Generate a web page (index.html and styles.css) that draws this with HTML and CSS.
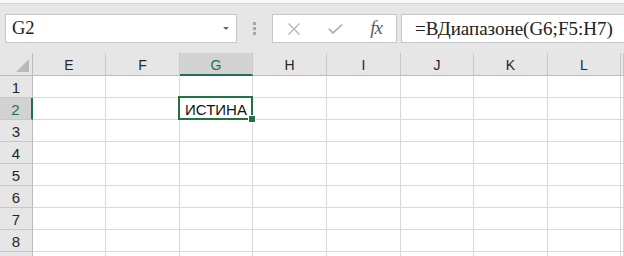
FILE: index.html
```html
<!DOCTYPE html>
<html lang="ru">

<head>
    <meta charset="UTF-8">
    <meta name="viewport" content="width=device-width, initial-scale=1.0">
    <title>ВДиапазоне</title>
    <link rel="stylesheet" href="styles.css">
</head>

<body>
    <div class="top-strip"></div>

    <div class="formula-bar">
        <div class="name-box">
            <span>G2</span>
            <span class="drop-arrow"></span>
        </div>
        <div class="grip">
            <span></span><span></span><span></span>
        </div>
        <div class="bar-buttons">
            <span class="btn">
                <svg width="14" height="12" viewBox="0 0 14 12">
                    <path d="M1.5 0.5 L12.5 11.5 M12.5 0.5 L1.5 11.5" stroke="#b3b3b3" stroke-width="1.3" fill="none" />
                </svg>
            </span>
            <span class="btn">
                <svg width="15" height="10" viewBox="0 0 15 10">
                    <path d="M0.8 4.8 L5 9 L14.2 0.6" stroke="#b3b3b3" stroke-width="1.8" fill="none" />
                </svg>
            </span>
            <span class="btn fx">fx</span>
        </div>
        <div class="formula">=ВДиапазоне(G6;F5:H7)</div>
    </div>

    <div class="sheet">
        <div class="corner"><span class="corner-tri"></span></div>
        <div class="col-head">E</div>
        <div class="col-head">F</div>
        <div class="col-head selected">G</div>
        <div class="col-head">H</div>
        <div class="col-head">I</div>
        <div class="col-head">J</div>
        <div class="col-head">K</div>
        <div class="col-head">L</div>
        <div class="col-head"></div>
    </div>
    <script>
        // build the rows of the grid (row 9 is only a sliver at the bottom)
        const sheet = document.querySelector('.sheet');
        for (let r = 1; r <= 9; r++) {
            const head = document.createElement('div');
            head.className = 'row-head' + (r === 2 ? ' selected' : '');
            if (r < 9) head.textContent = r;
            sheet.appendChild(head);
            for (let c = 0; c < 9; c++) {
                const cell = document.createElement('div');
                cell.className = 'cell';
                if (r === 2 && c === 2) {
                    cell.className = 'cell active';
                    cell.textContent = 'ИСТИНА';
                }
                sheet.appendChild(cell);
            }
        }
    </script>
</body>

</html>
```

FILE: styles.css
```css
* {
    box-sizing: border-box;
}

body {
    margin: 0;
    padding: 0;
    background-color: #e6e6e6;
    font-family: "Liberation Sans", Arial, sans-serif;
    overflow: hidden;
}

.top-strip {
    height: 4px;
    background-color: #f7f7f7;
    border-bottom: 1px solid #d4d4d4;
}

.formula-bar {
    display: flex;
    margin-top: 10px;
    height: 29px;
}

.name-box {
    display: flex;
    align-items: center;
    justify-content: space-between;
    margin-left: 5px;
    width: 232px;
    padding: 0 7px 0 6px;
    background-color: white;
    border: 1px solid #c6c6c6;
    font-family: "Liberation Serif", "Times New Roman", serif;
    font-size: 18.5px;
    color: #222;
}

.drop-arrow {
    width: 0;
    height: 0;
    border-left: 3px solid transparent;
    border-right: 3px solid transparent;
    border-top: 3px solid #6a6a6a;
}

.grip {
    width: 35px;
    display: flex;
    flex-direction: column;
    align-items: center;
    justify-content: center;
    gap: 2px;
}

.grip span {
    width: 3px;
    height: 3px;
    background-color: #a6a6a6;
}

.bar-buttons {
    display: grid;
    grid-template-columns: 41px 42px 40px;
    width: 125px;
    background-color: white;
    border: 1px solid #c6c6c6;
}

.btn {
    display: flex;
    align-items: center;
    justify-content: center;
}

.fx {
    font-family: "Liberation Serif", "Times New Roman", serif;
    font-style: italic;
    font-size: 19px;
    color: #5c5c5c;
    letter-spacing: -1px;
    padding-bottom: 2px;
}

.formula {
    flex: 1;
    margin-left: 4px;
    margin-right: -2px;
    padding-left: 13px;
    display: flex;
    align-items: center;
    background-color: white;
    border: 1px solid #c6c6c6;
    font-family: "Liberation Serif", "Times New Roman", serif;
    font-size: 19px;
    color: #222;
}

.sheet {
    display: grid;
    grid-template-columns: 33px 73px 74px 73px 74px 74px 73px 74px 73px 1fr;
    grid-template-rows: 23px;
    grid-auto-rows: 22px;
    margin-top: 10px;
    font-size: 14px;
}

.corner {
    position: relative;
    background-color: #e6e6e6;
    border-right: 1px solid #bcbcbc;
    border-bottom: 1px solid #bcbcbc;
}

.corner-tri {
    position: absolute;
    right: 3px;
    bottom: 3px;
    width: 0;
    height: 0;
    border-left: 13px solid transparent;
    border-bottom: 13px solid #b9b9b9;
}

.col-head,
.row-head {
    display: flex;
    align-items: center;
    justify-content: center;
    background-color: #e6e6e6;
    color: #262626;
    border-right: 1px solid #c8c8c8;
    border-bottom: 1px solid #bcbcbc;
}

.col-head {
    padding-top: 2px;
}

.row-head {
    border-right-color: #bcbcbc;
    border-bottom-color: #c8c8c8;
    padding-top: 2px;
    font-size: 15px;
}

.col-head.selected {
    background-color: #d2d2d2;
    color: #217346;
    border-bottom: 2px solid #217346;
}

.row-head.selected {
    background-color: #d2d2d2;
    color: #217346;
    border-right: 2px solid #217346;
}

.cell {
    background-color: white;
    border-right: 1px solid #d9d9d9;
    border-bottom: 1px solid #d9d9d9;
}

.cell.active {
    position: relative;
    display: flex;
    align-items: center;
    justify-content: center;
    padding-top: 2px;
    font-size: 15px;
    color: #111;
}

.cell.active::before {
    content: "";
    position: absolute;
    top: -2px;
    left: -2px;
    right: -1px;
    bottom: -1px;
    border: 2px solid #217346;
}

.cell.active::after {
    content: "";
    position: absolute;
    right: -4px;
    bottom: -4px;
    width: 6px;
    height: 6px;
    background-color: #217346;
    border: 1px solid white;
}
```
